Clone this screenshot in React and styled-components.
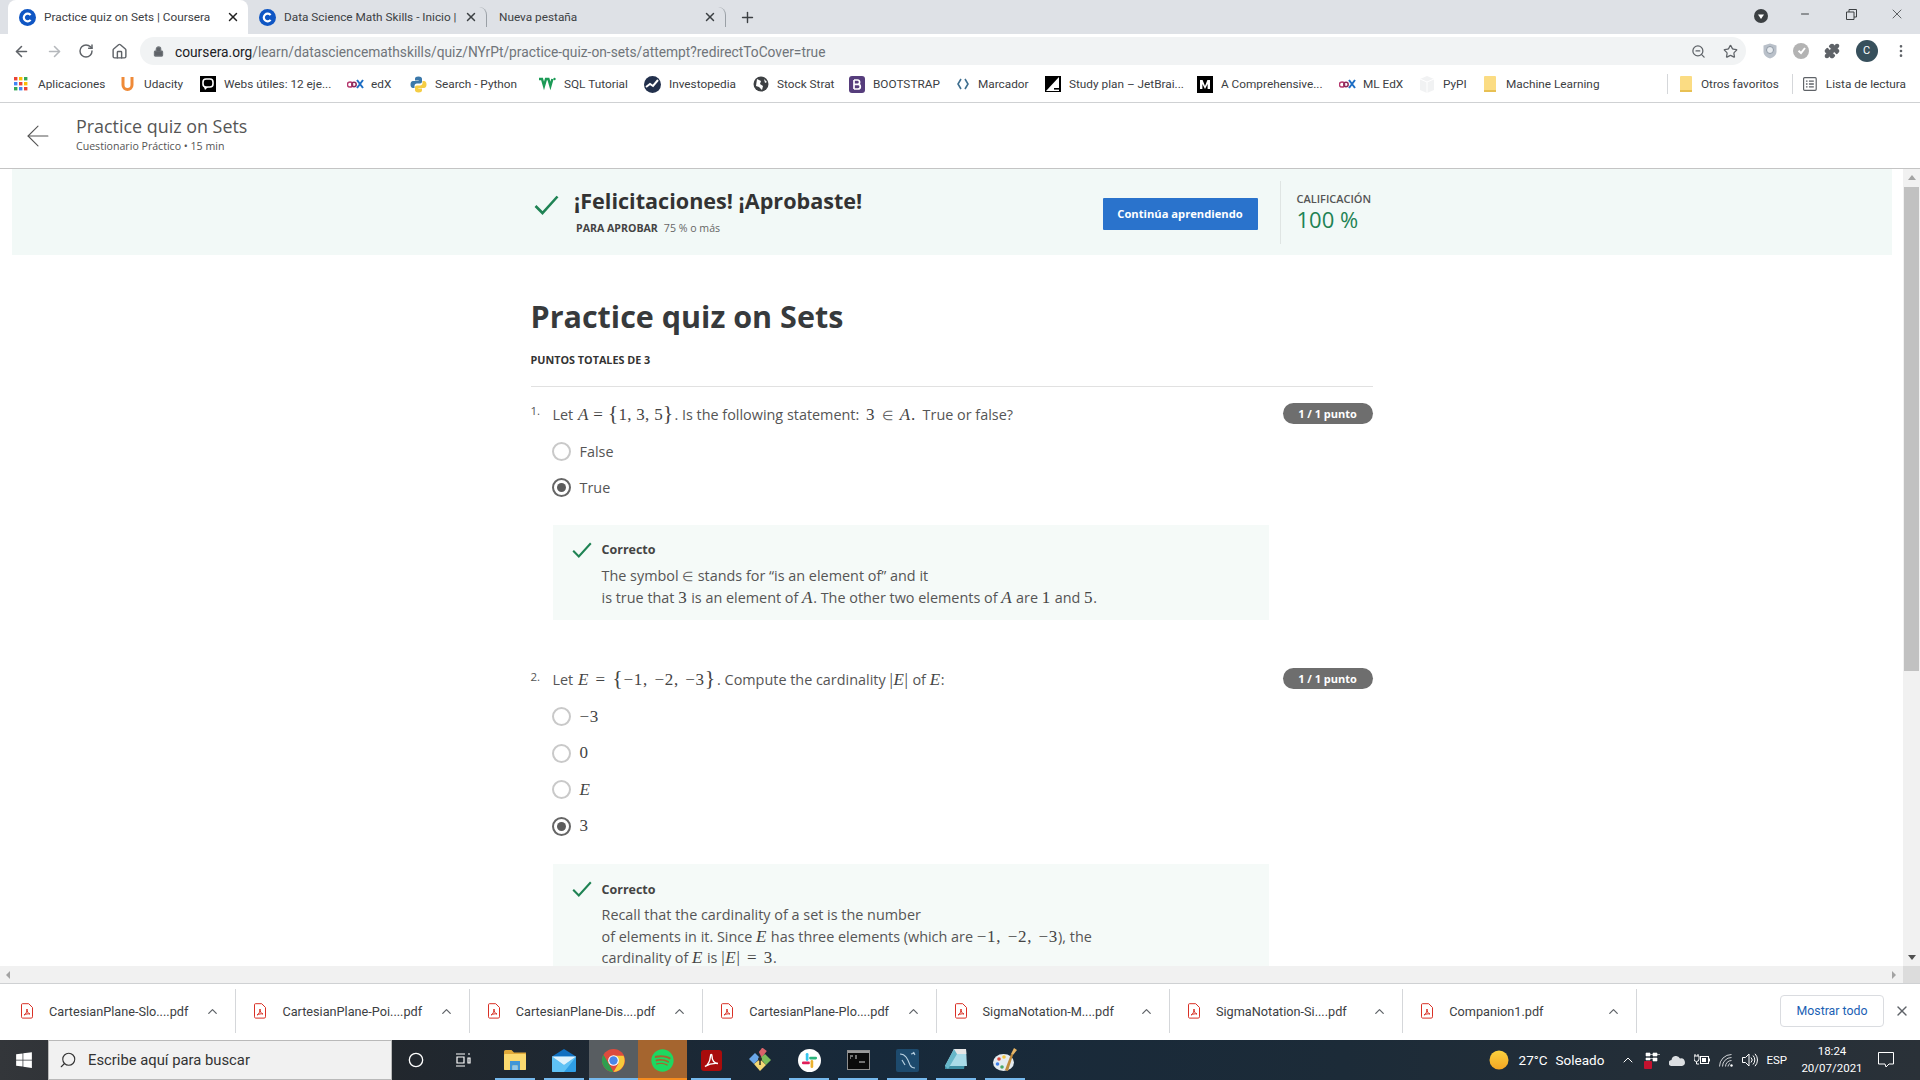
// App.jsx
import React from "react";
import styled, { createGlobalStyle } from "styled-components";
import {
  ArrowLeft,
  ArrowRight,
  RotateCw,
  Home,
  Lock,
  ZoomOut,
  Star,
  Puzzle,
  MoreVertical,
  Minus,
  X,
  Plus,
  ChevronUp,
  Search,
  Circle,
} from "lucide-react";
import { FaWindows, FaSpotify } from "react-icons/fa";

const GlobalStyle = createGlobalStyle`
  html, body {
    margin: 0;
    padding: 0;
    height: 100%;
    overflow: hidden;
    background: #fff;
    font-family: "Open Sans", "Liberation Sans", sans-serif;
  }
  * { box-sizing: border-box; }
`;

const Screen = styled.div`
  width: 1920px;
  height: 1080px;
  display: flex;
  flex-direction: column;
  overflow: hidden;
`;

/* ---------- browser chrome ---------- */

const TabStrip = styled.div`
  height: 34px;
  background: #dee1e6;
  display: flex;
  align-items: stretch;
  padding-left: 8px;
  font-family: Roboto, sans-serif;
  font-size: 11.8px;
  color: #3c4043;
`;

const Tab = styled.div`
  width: ${(p) => p.$w}px;
  display: flex;
  align-items: center;
  padding: 0 8px 0 ${(p) => p.$pad}px;
  background: ${(p) => (p.$active ? "#fff" : "transparent")};
  border-radius: 8px 8px 0 0;
  border-right: ${(p) => (p.$sep ? "1px solid #9aa0a6" : "none")};
  margin: ${(p) => (p.$active ? "0" : "7px 0")};
`;

const TabTitle = styled.span`
  flex: 1;
  margin-left: ${(p) => p.$gap || 0}px;
  white-space: nowrap;
  overflow: hidden;
`;

const NewTab = styled.div`
  display: flex;
  align-items: center;
  margin-left: 13px;
  color: #3c4043;
`;

const WindowControls = styled.div`
  margin-left: auto;
  display: flex;
  align-items: center;
  height: 28px;
  color: #3c4043;
`;

const ControlSlot = styled.div`
  width: 46px;
  display: flex;
  justify-content: center;
`;

const ProfileBadge = styled.div`
  display: flex;
  margin: 3px 14px 0 0;
`;

const Toolbar = styled.div`
  height: 34px;
  background: #fff;
  display: flex;
  align-items: center;
  padding-left: 13px;
  color: #5f6368;
`;

const NavSlot = styled.div`
  width: ${(p) => p.$w || 32.5}px;
  display: flex;
  color: ${(p) => (p.$muted ? "#b5b8bc" : "#5f6368")};
`;

const AddressBar = styled.div`
  width: 1606px;
  height: 28px;
  margin-left: -1px;
  background: #f1f3f4;
  border-radius: 14px;
  display: flex;
  align-items: center;
  padding: 1px 10px 0 13px;
  font-family: Roboto, sans-serif;
  font-size: 13.76px;
  color: #70757a;
`;

const Url = styled.span`
  margin-left: 11px;
  b {
    font-weight: 400;
    color: #202124;
  }
`;

const AddressActions = styled.div`
  margin-left: auto;
  display: flex;
  gap: 17px;
  margin-right: -2px;
  color: #5f6368;
`;

const ExtensionRow = styled.div`
  display: flex;
  align-items: center;
  margin-left: 17px;
  gap: 15.5px;
`;

const Avatar = styled.div`
  width: 22px;
  height: 22px;
  border-radius: 50%;
  background: #37505c;
  color: #fff;
  font-size: 11px;
  line-height: 22px;
  text-align: center;
  font-family: Roboto, sans-serif;
`;

const BookmarkBar = styled.div`
  height: 35px;
  background: #fff;
  border-bottom: 1px solid #cfd1d3;
  display: flex;
  align-items: center;
  padding: 0 0 2px 14px;
  font-family: Roboto, sans-serif;
  font-size: 11.8px;
  color: #3c4043;
`;

const Bookmark = styled.div`
  width: ${(p) => p.$w}px;
  display: flex;
  align-items: center;
  gap: ${(p) => p.$gap || 8}px;
  white-space: nowrap;
  flex: none;
`;

const BarEnd = styled.div`
  margin-left: auto;
  display: flex;
  align-items: center;
  height: 100%;
  padding-right: 14px;
`;

const BarSep = styled.div`
  width: 1px;
  height: 20px;
  background: #d5d7da;
  margin: 0 ${(p) => p.$r}px 0 ${(p) => p.$l}px;
`;

/* ---------- page ---------- */

const PageHeader = styled.div`
  height: 66px;
  border-bottom: 1px solid #c4c4c4;
  display: flex;
  align-items: center;
  padding-left: 21px;
  color: #555;
`;

const HeaderText = styled.div`
  margin-left: 21px;
  margin-top: -4px;
`;

const HeaderTitle = styled.div`
  font-size: 17.9px;
  line-height: 24px;
  color: #555;
`;

const HeaderSub = styled.div`
  font-size: 10.6px;
  line-height: 14px;
  margin-top: 1px;
  color: #555;
`;

const Viewport = styled.div`
  flex: 1;
  min-height: 0;
  display: flex;
`;

const PageScroll = styled.div`
  flex: 1;
  min-width: 0;
  overflow: hidden;
`;

const VScrollbar = styled.div`
  width: 17px;
  background: #f1f1f1;
  display: flex;
  flex-direction: column;
  align-items: center;
  padding-top: 6px;
`;

const UpArrow = styled.div`
  width: 0;
  height: 0;
  border-left: 4px solid transparent;
  border-right: 4px solid transparent;
  border-bottom: 5px solid #a3a3a3;
`;

const DownArrow = styled.div`
  width: 0;
  height: 0;
  border-left: 4px solid transparent;
  border-right: 4px solid transparent;
  border-top: 5px solid #505050;
  margin-top: auto;
  margin-bottom: 6px;
`;

const VThumb = styled.div`
  width: 15px;
  height: 484px;
  margin-top: 7px;
  background: #c1c1c1;
`;

const Banner = styled.div`
  height: 86px;
  margin: 0 11px 0 12px;
  background: #f2f9f7;
  display: flex;
  justify-content: center;
`;

const BannerInner = styled.div`
  width: 842px;
  display: flex;
  align-items: center;
`;

const BannerCheck = styled.div`
  width: 43px;
  padding-left: 3px;
  margin-top: -15px;
  display: flex;
`;

const BannerText = styled.div`
  flex: 1;
`;

const BannerTitle = styled.div`
  font-size: 21.6px;
  font-weight: 700;
  line-height: 30px;
  color: #333;
  margin-top: -3px;
`;

const BannerNote = styled.div`
  font-size: 10.6px;
  margin: 5px 0 0 2px;
  line-height: 14px;
  color: #666;
  b {
    color: #444;
    margin-right: 6px;
  }
`;

const ContinueButton = styled.div`
  width: 155px;
  height: 32px;
  background: #2a73cc;
  color: #fff;
  font-size: 11.2px;
  font-weight: 700;
  line-height: 32px;
  text-align: center;
  border-radius: 1px;
  margin-top: 3px;
`;

const Score = styled.div`
  width: 93.5px;
  height: 63px;
  margin-left: 22px;
  padding-left: 16px;
  border-left: 1px solid #dfe5e3;
  margin-top: 1px;
`;

const ScoreLabel = styled.div`
  font-size: 11px;
  line-height: 14px;
  margin-top: 11px;
  color: #555;
  font-weight: 600;
  white-space: nowrap;
`;

const ScoreValue = styled.div`
  font-size: 22px;
  line-height: 26px;
  color: #1f8354;
`;

const Column = styled.div`
  width: 842px;
  margin: 0 auto;
  padding-top: 37px;
`;

const QuizTitle = styled.h1`
  margin: 0;
  font-size: 30.5px;
  font-weight: 700;
  line-height: 48px;
  color: #373a3c;
`;

const TotalPoints = styled.div`
  margin-top: 12px;
  font-size: 10.8px;
  font-weight: 700;
  line-height: 16px;
  color: #333;
`;

const Rule = styled.div`
  margin-top: 18px;
  height: 1px;
  background: #e1e1e1;
`;

const Question = styled.div`
  margin-top: ${(p) => p.$top}px;
`;

const QuestionRow = styled.div`
  display: flex;
  align-items: center;
  height: 22px;
  font-size: 14.4px;
  color: #555;
`;

const QuestionNumber = styled.div`
  width: 22px;
  font-size: 11.5px;
  margin-top: -5px;
`;

const QuestionText = styled.div`
  flex: 1;
`;

const PointsBadge = styled.div`
  width: 90px;
  height: 21px;
  background: #6e6e6e;
  border-radius: 11px;
  color: #fff;
  font-size: 11px;
  font-weight: 700;
  line-height: 21px;
  text-align: center;
`;

const Options = styled.div`
  margin: 9px 0 ${(p) => p.$after}px 21px;
`;

const OptionRow = styled.div`
  height: 36.4px;
  display: flex;
  align-items: center;
  font-size: 14.4px;
  color: #555;
`;

const Radio = styled.div`
  width: 19px;
  height: 19px;
  border-radius: 50%;
  border: 2px solid ${(p) => (p.$on ? "#666" : "#c9c9c9")};
  background: #fff;
  margin-right: 9px;
  display: flex;
  align-items: center;
  justify-content: center;
  &::after {
    content: "";
    width: 9px;
    height: 9px;
    border-radius: 50%;
    background: ${(p) => (p.$on ? "#5c5c5c" : "transparent")};
  }
`;

const Feedback = styled.div`
  width: 716px;
  margin-left: 22px;
  padding: 15px 0 11px 19px;
  background: #f5faf8;
  font-size: 14.4px;
  color: #555;
`;

const FeedbackHead = styled.div`
  display: flex;
  align-items: center;
  height: 20px;
  font-size: 12.5px;
  font-weight: 700;
  color: #444;
  gap: 10px;
`;

const FeedbackBody = styled.div`
  margin: 5px 0 0 30px;
  line-height: 21.5px;
`;

/* math keeps the textbook serif, as in the reference */
const M = styled.span`
  font-family: "Liberation Serif", serif;
  font-size: 17px;
  letter-spacing: ${(p) => (p.$tight ? 0.1 : 0.7)}px;
  word-spacing: ${(p) => (p.$tight ? 0.5 : 1.5)}px;
  color: #444;
  white-space: nowrap;
  margin: 0 ${(p) => p.$pad || 0}px;
  i {
    font-style: italic;
  }
`;

const Brace = styled.span`
  font-size: 22px;
  line-height: 1;
`;

const Member = styled.span`
  font-size: 13px;
  color: #666;
`;

/* ---------- bottom bars ---------- */

const HScrollbar = styled.div`
  height: 17px;
  background: #f1f1f1;
  display: flex;
  align-items: center;
  padding-left: 6px;
`;

const SideArrow = styled.div`
  width: 0;
  height: 0;
  border-top: 4px solid transparent;
  border-bottom: 4px solid transparent;
  border-right: ${(p) => (p.$left ? "4px solid #a3a3a3" : "none")};
  border-left: ${(p) => (p.$left ? "none" : "4px solid #a3a3a3")};
  margin-left: ${(p) => (p.$left ? 0 : 1882)}px;
`;

const ScrollCorner = styled.div`
  width: 17px;
  height: 17px;
  margin-left: auto;
  background: #dcdcdc;
`;

const DownloadBar = styled.div`
  height: 57px;
  border-top: 1px solid #cfd1d3;
  background: #fff;
  display: flex;
  align-items: center;
  padding: 0 0 2px 3px;
  font-family: Roboto, sans-serif;
  font-size: 12.7px;
  color: #3c4043;
`;

const DownloadItem = styled.div`
  width: 233.4px;
  height: 44px;
  border-right: 1px solid #d5d7da;
  display: flex;
  align-items: center;
  padding-left: 18px;
  gap: 16px;
`;

const FileName = styled.span`
  flex: 1;
  white-space: nowrap;
`;

const Chevron = styled.span`
  display: flex;
  margin-right: 15px;
  color: #5f6368;
`;

const ShowAll = styled.div`
  margin-left: auto;
  width: 104px;
  height: 32px;
  border: 1px solid #dadce0;
  border-radius: 4px;
  color: #1a5fb4;
  font-size: 12.3px;
  line-height: 30px;
  text-align: center;
`;

const CloseBar = styled.div`
  width: 36px;
  display: flex;
  justify-content: center;
  color: #5f6368;
`;

const Taskbar = styled.div`
  height: 40px;
  background: linear-gradient(90deg, #33363a 0, #22272d 20%, #17293a 45%, #1c2b38 70%, #2a3138 100%);
  display: flex;
  align-items: center;
  color: #fff;
  font-family: Roboto, sans-serif;
`;

const StartButton = styled.div`
  width: 48px;
  display: flex;
  justify-content: center;
`;

const SearchBox = styled.div`
  width: 344px;
  height: 40px;
  background: #f1f1f1;
  border: 1px solid #b9b9b9;
  display: flex;
  align-items: center;
  padding-left: 10px;
  gap: 11px;
  color: #333;
  font-size: 14.8px;
`;

const MirroredSearch = styled(Search)`
  transform: scaleX(-1);
`;

const SystemButton = styled.div`
  width: 47.5px;
  display: flex;
  justify-content: center;
  color: #fff;
`;

const AppRow = styled.div`
  display: flex;
  margin-left: 3.5px;
`;

const AppSlot = styled.div`
  width: 49px;
  height: 40px;
  display: flex;
  align-items: center;
  justify-content: center;
  position: relative;
  background: ${(p) => p.$bg || "transparent"};
  &::after {
    content: "";
    position: absolute;
    left: ${(p) => (p.$bg ? 0 : 4.5)}px;
    right: ${(p) => (p.$bg ? 0 : 4.5)}px;
    bottom: 0;
    height: 2px;
    background: ${(p) => p.$line || "transparent"};
  }
`;

const Tray = styled.div`
  margin-left: auto;
  display: flex;
  align-items: center;
`;

const TrayText = styled.span`
  margin: 0 ${(p) => p.$r || 0}px 0 ${(p) => p.$l || 0}px;
  font-size: ${(p) => p.$size || 13}px;
`;

const TrayIcon = styled.span`
  display: flex;
  margin-right: ${(p) => p.$r}px;
`;

const Clock = styled.div`
  width: 70px;
  margin-left: 10px;
  font-size: 11.5px;
  line-height: 17px;
  text-align: center;
`;

const NotifySlot = styled.div`
  width: 53px;
  display: flex;
  justify-content: flex-end;
  padding-right: 26px;
`;

/* ---------- drawn icons ---------- */

const Coursera = () => (
  <svg width="17" height="17" viewBox="0 0 17 17">
    <circle cx="8.5" cy="8.5" r="8.5" fill="#0f56c4" />
    <path d="M11.6 6.2a3.8 3.8 0 1 0 0 4.6" fill="none" stroke="#fff" strokeWidth="2.2" />
  </svg>
);

const AppsGrid = () => {
  const colors = ["#ea4335", "#fbbc04", "#34a853", "#4285f4", "#ea4335", "#fbbc04", "#34a853", "#4285f4", "#ea4335"];
  return (
    <svg width="14" height="14" viewBox="0 0 14 14">
      {colors.map((c, i) => (
        <rect key={i} x={(i % 3) * 5} y={Math.floor(i / 3) * 5} width="3.4" height="3.4" fill={c} />
      ))}
    </svg>
  );
};

const Udacity = () => (
  <svg width="13" height="16" viewBox="0 0 13 16">
    <path d="M2 1v8a4.5 4.5 0 0 0 9 0V1" fill="none" stroke="#ef8a38" strokeWidth="3" />
  </svg>
);

const Chat = () => (
  <svg width="16" height="16" viewBox="0 0 16 16">
    <rect width="16" height="16" fill="#000" />
    <rect x="3" y="3" width="10" height="8" rx="3" fill="none" stroke="#fff" strokeWidth="1.6" />
    <path d="M4 11h4l-3 3z" fill="#fff" />
  </svg>
);

const EdX = () => (
  <svg width="17" height="10" viewBox="0 0 17 10">
    <circle cx="3" cy="5.5" r="2.6" fill="none" stroke="#b5386e" strokeWidth="1.5" />
    <circle cx="7" cy="5.5" r="2.2" fill="none" stroke="#8e2a5c" strokeWidth="1.5" />
    <path d="M10 1l6 8M16 1l-6 8" stroke="#1c6dc4" strokeWidth="2" />
  </svg>
);

const Python = () => (
  <svg width="17" height="17" viewBox="0 0 17 17">
    <path d="M8.500 0.500c-3 0-3.500 1-3.500 2.500v1.500h3.700v.6H3C1.400 5.100.5 6.300.5 8.500s.9 3.400 2.500 3.400h1.500V10c0-1.500 1-2.400 2.400-2.400h3.200c1.200 0 1.900-.8 1.900-2V3c0-1.600-1-2.500-3.500-2.500z" fill="#3b78aa" />
    <path d="M8.500 16.500c3 0 3.500-1 3.500-2.500v-1.500H8.300v-.6H14c1.600 0 2.500-1.200 2.500-3.400s-.9-3.400-2.500-3.400h-1.500V7c0 1.500-1 2.400-2.400 2.400H6.900c-1.200 0-1.900.8-1.900 2V14c0 1.600 1 2.500 3.500 2.500z" fill="#f5cd44" />
  </svg>
);

const W3 = () => (
  <svg width="17" height="14" viewBox="0 0 17 14">
    <path d="M0 2h3l2 7 2-7h2.400l2 7 2-7" fill="none" stroke="#1b9a56" strokeWidth="2.4" />
    <circle cx="15.500" cy="2" r="1.200" fill="#1b9a56" />
  </svg>
);

const Investopedia = () => (
  <svg width="17" height="17" viewBox="0 0 17 17">
    <circle cx="8.500" cy="8.500" r="8.500" fill="#22304c" />
    <path d="M2 11l4-3 3 2 5-6" fill="none" stroke="#fff" strokeWidth="2" />
  </svg>
);

const Globe = () => (
  <svg width="16" height="16" viewBox="0 0 16 16">
    <circle cx="8" cy="8" r="7.500" fill="#3d4043" />
    <path d="M4 3l4 2-1 3 3 2-1 4-3-3-3-1zM11 3l3 3-2 1z" fill="#fff" />
  </svg>
);

const Bootstrap = () => (
  <svg width="16" height="17" viewBox="0 0 16 17">
    <rect width="16" height="17" rx="3" fill="#563d7c" />
    <path d="M5 4v9M5 4h3.400a2.200 2.200 0 0 1 0 4.400H5M5 8.400h4a2.300 2.300 0 0 1 0 4.600H5" fill="none" stroke="#fff" strokeWidth="1.700" />
  </svg>
);

const Marker = () => (
  <svg width="16" height="16" viewBox="0 0 16 16">
    <path d="M6 3L3 8l3 5M10 3l3 5-3 5" fill="none" stroke="#3f6f8f" strokeWidth="1.600" />
  </svg>
);

const JetBrains = () => (
  <svg width="16" height="16" viewBox="0 0 16 16">
    <rect width="16" height="16" fill="#000" />
    <path d="M1 15L14 1v14z" fill="#fff" />
    <rect x="9" y="12" width="5" height="1.600" fill="#000" />
  </svg>
);

const Medium = () => (
  <svg width="16" height="17" viewBox="0 0 16 17">
    <rect width="16" height="17" fill="#000" />
    <path d="M3 4h2.600L8 10l2.400-6H13v9H10.600V8L8 13 5.400 8v5H3z" fill="#fff" />
  </svg>
);

const PyPI = () => (
  <svg width="14" height="17" viewBox="0 0 14 17">
    <path d="M7 0l7 3v11l-7 3-7-3V3z" fill="#f1f2f3" />
    <path d="M7 6v11M0 3l7 3 7-3" fill="none" stroke="#fff" />
  </svg>
);

const Folder = () => (
  <svg width="12" height="16" viewBox="0 0 12 16">
    <rect width="12" height="16" rx="1" fill="#fbdc83" />
    <rect y="14" width="12" height="2" fill="#e8c053" />
  </svg>
);

const Reader = () => (
  <svg width="14" height="14" viewBox="0 0 14 14">
    <rect x="0.600" y="0.600" width="12.800" height="12.800" rx="1" fill="none" stroke="#5f6368" strokeWidth="1.200" />
    <path d="M3 4h1.600M6 4h5M3 7h1.600M6 7h5M3 10h1.600M6 10h5" stroke="#5f6368" strokeWidth="1.300" />
  </svg>
);

const ProfileDrop = () => (
  <svg width="14" height="14" viewBox="0 0 14 14">
    <circle cx="7" cy="7" r="7" fill="#3c4043" />
    <path d="M4 5.500h6L7 10z" fill="#fff" />
  </svg>
);

const RestoreIcon = () => (
  <svg width="11" height="11" viewBox="0 0 11 11">
    <path d="M.5 3h7.500v7.500H.5zM3 3V.5h7.500V8H8" fill="none" stroke="#3c4043" />
  </svg>
);

const ShieldExt = () => (
  <svg width="14" height="16" viewBox="0 0 14 16">
    <path d="M7 .5l6.500 2v6c0 3.500-3 6-6.500 7-3.500-1-6.500-3.500-6.500-7v-6z" fill="#b9c0c9" />
    <circle cx="7" cy="7" r="3.500" fill="#e8ecf0" stroke="#8f99a5" />
  </svg>
);

const GrayExt = () => (
  <svg width="16" height="16" viewBox="0 0 16 16">
    <circle cx="8" cy="8" r="8" fill="#b3b3b3" />
    <path d="M12 5l-4 5-2.500-2.200" fill="none" stroke="#fff" strokeWidth="2" />
  </svg>
);

const Check = ({ size }) => (
  <svg width={size} height={size * 0.8} viewBox="0 0 25 20">
    <path d="M1.500 11l7 7L23.500 1.500" fill="none" stroke="#1f8354" strokeWidth="2.600" />
  </svg>
);

const PdfIcon = () => (
  <svg width="12" height="16" viewBox="0 0 12 16">
    <path d="M1.500.7h6.200l3.800 3.800v9.300a1.300 1.300 0 0 1-1.300 1.300H1.500A1.300 1.300 0 0 1 .5 13.800V1.700a1 1 0 0 1 1-1z" fill="#fff" stroke="#d93025" />
    <path d="M3 12c2-1 3-3 3-6 0 3 1 4 3 5-2-.5-4 0-6 1z" fill="none" stroke="#d93025" />
  </svg>
);

const Explorer = () => (
  <svg width="22" height="20" viewBox="0 0 22 20">
    <path d="M0 1.500A1.500 1.500 0 0 1 1.500 0h6L10 2.500h12V19a1 1 0 0 1-1 1H1a1 1 0 0 1-1-1z" fill="#e0a93a" />
    <rect y="4" width="22" height="16" rx="1" fill="#fbd96f" />
    <path d="M6 11h10v9h-2.500v-4.500h-5V20H6z" fill="#3f96d8" />
    <rect x="8.500" y="15.500" width="5" height="4.500" fill="#8fc8ee" />
  </svg>
);

const Mail = () => (
  <svg width="24" height="23" viewBox="0 0 24 23">
    <path d="M0 7.500L12 0l12 7.500L12 14z" fill="#0f6fc0" />
    <path d="M0 7.500h24V22a1 1 0 0 1-1 1H1a1 1 0 0 1-1-1z" fill="#2f9fe6" />
    <path d="M0 7.500L12 16 24 7.500V8L12 23H1a1 1 0 0 1-1-1z" fill="#5fc2f5" />
    <path d="M0 7.500h24L12 16z" fill="#dff2fc" />
  </svg>
);

const Chrome = () => (
  <svg width="23" height="23" viewBox="0 0 24 24">
    <circle cx="12" cy="12" r="12" fill="#dd4b3e" />
    <path d="M1.600 6L7 15.500 12 24A12 12 0 0 1 1.600 6z" fill="#2f9e4f" />
    <path d="M12 7h10.500A12 12 0 0 1 12 24l5-8.500z" fill="#f8c93a" />
    <circle cx="12" cy="12" r="5.600" fill="#fff" />
    <circle cx="12" cy="12" r="4.400" fill="#4a86e8" />
  </svg>
);

const Acrobat = () => (
  <svg width="21" height="21" viewBox="0 0 21 21">
    <rect width="21" height="21" rx="3" fill="#a90c0c" />
    <path d="M4 16.500c3-1.500 5-6 5.500-10.500 0-2 1.500-2 1.500 0 0 4.500 2 7 6 7.500-4.500-.5-9 .5-13 3z" fill="none" stroke="#fff" strokeWidth="1.400" />
  </svg>
);

const Kraken = () => (
  <svg width="24" height="24" viewBox="0 0 24 24">
    <path d="M12 4l4-4 4 4-4 4-2 2z" fill="#d9636a" transform="rotate(-8 12 12)" />
    <path d="M1 11l6-6 5 5-6 6z" fill="#6aa6e8" />
    <path d="M12 10l5-4 6 6-5 5z" fill="#7dbd5a" />
    <path d="M6 16l6-5 6 6-6 6z" fill="#f3d774" />
    <circle cx="12" cy="11" r="2" fill="#2a2a2a" />
    <path d="M12 11v6" stroke="#2a2a2a" strokeWidth="1.500" />
  </svg>
);

const Slack = () => (
  <svg width="23" height="23" viewBox="0 0 24 24">
    <circle cx="12" cy="12" r="12" fill="#fff" />
    <path d="M9.500 5.500v5.500" stroke="#36c5f0" strokeWidth="2.800" strokeLinecap="round" />
    <path d="M13 9.500h5.500" stroke="#2eb67d" strokeWidth="2.800" strokeLinecap="round" />
    <path d="M14.500 13v5.500" stroke="#ecb22e" strokeWidth="2.800" strokeLinecap="round" />
    <path d="M5.500 14.500H11" stroke="#e01e5a" strokeWidth="2.800" strokeLinecap="round" />
  </svg>
);

const Terminal = () => (
  <svg width="23" height="20" viewBox="0 0 23 20">
    <rect x=".5" y=".5" width="22" height="19" fill="#0b0b0b" stroke="#8e8e8e" />
    <rect x="1" y="1" width="21" height="2" fill="#9a9a9a" />
    <path d="M3 6h3M3 8h1M8 6h2M8 8h2M12 12h6" stroke="#d8d8d8" />
  </svg>
);

const Sql = () => (
  <svg width="23" height="23" viewBox="0 0 23 23">
    <rect width="23" height="23" rx="2" fill="#1d4a6d" />
    <path d="M4 5c6 0 8 6 10 11 1 2 3 3 5 3M6 11l3 5M17 3l2 3M15 5l4-1" fill="none" stroke="#b7cfe0" strokeWidth="1.200" />
  </svg>
);

const Notepad = () => (
  <svg width="22" height="24" viewBox="0 0 22 24">
    <path d="M9 1h12l1 17H0z" fill="#a9dbe8" />
    <path d="M9 1h12l.3 5H7z" fill="#e6e6e6" />
    <path d="M0 18h22v3H0z" fill="#3d8ea3" transform="skewX(-8)" />
    <path d="M9 1L0 18l3 3 9-15z" fill="#67b7c9" />
  </svg>
);

const Paint = () => (
  <svg width="25" height="25" viewBox="0 0 25 25">
    <ellipse cx="10.500" cy="14.500" rx="10.500" ry="8.500" fill="#e4ebf0" />
    <circle cx="6" cy="11" r="1.800" fill="#d94a3d" />
    <circle cx="11" cy="9" r="1.800" fill="#f3c53c" />
    <circle cx="4.500" cy="16" r="1.800" fill="#3f80ea" />
    <circle cx="9" cy="19" r="1.800" fill="#49a768" />
    <path d="M12 22L18 6l2 1-5 16z" fill="#c08a3a" />
    <path d="M18 6l3-6 3 2-4 5z" fill="#e7b566" />
  </svg>
);

const Sun = () => (
  <svg width="20" height="20" viewBox="0 0 20 20">
    <defs>
      <linearGradient id="sunFill" x1="0" y1="0" x2="0" y2="1">
        <stop offset="0" stopColor="#fbd23e" />
        <stop offset="1" stopColor="#f5a623" />
      </linearGradient>
    </defs>
    <circle cx="10" cy="10" r="9.500" fill="url(#sunFill)" />
  </svg>
);

const TrayDropbox = () => (
  <svg width="16" height="17" viewBox="0 0 16 17">
    <path d="M2 1h4v3H2zM9 1h4v3H9zM2 6h4v2H2zM9 6h4v3H9zM6 2.500h3M6 6.500h3M13 2.500h3" fill="#fff" stroke="#fff" strokeWidth=".6" />
    <rect y="9" width="8" height="8" rx="1" fill="#c4122f" />
  </svg>
);

const TrayCloud = () => (
  <svg width="16" height="11" viewBox="0 0 16 11">
    <path d="M3 11a3 3 0 0 1-.5-6A4.500 4.500 0 0 1 11 3.500 3.800 3.800 0 0 1 13 11z" fill="#dcdfe2" />
  </svg>
);

const TrayPower = () => (
  <svg width="16" height="12" viewBox="0 0 16 12">
    <path d="M1 0v2M4 0v2M0 2h5v3a2.500 2.500 0 0 1-5 0zM2.500 8v2h2.500" fill="none" stroke="#fff" />
    <rect x="6.500" y="2.500" width="8" height="7" fill="none" stroke="#fff" />
    <rect x="8" y="4" width="4" height="4" fill="#fff" />
    <rect x="15" y="4.500" width="1" height="3" fill="#fff" />
  </svg>
);

const TrayWifi = () => (
  <svg width="15" height="13" viewBox="0 0 15 13">
    <path d="M.5 12.500A12 12 0 0 1 12.500.5M3.500 12.500a9 9 0 0 1 9-9M6.500 12.500a6 6 0 0 1 6-6M9 12.500a3.500 3.500 0 0 1 2-3" fill="none" stroke="#cfd2d5" strokeWidth="1" />
    <circle cx="12.500" cy="11.500" r="1.200" fill="#fff" />
  </svg>
);

const TrayVolume = () => (
  <svg width="16" height="14" viewBox="0 0 16 14">
    <path d="M.5 4.500h3L7 1v12L3.500 9.500h-3z" fill="none" stroke="#fff" />
    <path d="M9 4.500a3.500 3.500 0 0 1 0 5M11 2.500a6.500 6.500 0 0 1 0 9M13 .8a9 9 0 0 1 0 12.400" fill="none" stroke="#fff" />
  </svg>
);

const TrayNotify = () => (
  <svg width="16" height="16" viewBox="0 0 16 16">
    <path d="M.5.5h15v11.500h-4.500L8 15l-1-3H.5z" fill="none" stroke="#fff" />
  </svg>
);

const TaskView = () => (
  <svg width="16" height="16" viewBox="0 0 16 16">
    <path d="M1 2h9M1 14h9M2 5h7v6H2zM13 2h2M13 6h2v5h-2z" fill="none" stroke="#fff" strokeWidth="1.200" />
  </svg>
);

/* ---------- data ---------- */

const bookmarks = [
  { w: 107, icon: <AppsGrid />, label: "Aplicaciones", gap: 10 },
  { w: 79, icon: <Udacity />, label: "Udacity", gap: 10 },
  { w: 147, icon: <Chat />, label: "Webs útiles: 12 eje..." },
  { w: 63, icon: <EdX />, label: "edX", gap: 7 },
  { w: 129, icon: <Python />, label: "Search - Python" },
  { w: 105, icon: <W3 />, label: "SQL Tutorial" },
  { w: 109, icon: <Investopedia />, label: "Investopedia" },
  { w: 96, icon: <Globe />, label: "Stock Strat" },
  { w: 106, icon: <Bootstrap />, label: "BOOTSTRAP" },
  { w: 90, icon: <Marker />, label: "Marcador", gap: 7 },
  { w: 152, icon: <JetBrains />, label: "Study plan – JetBrai..." },
  { w: 142, icon: <Medium />, label: "A Comprehensive..." },
  { w: 81, icon: <EdX />, label: "ML EdX", gap: 7 },
  { w: 64, icon: <PyPI />, label: "PyPI", gap: 9 },
  { w: 160, icon: <Folder />, label: "Machine Learning", gap: 10 },
];

const downloads = [
  "CartesianPlane-Slo....pdf",
  "CartesianPlane-Poi....pdf",
  "CartesianPlane-Dis....pdf",
  "CartesianPlane-Plo....pdf",
  "SigmaNotation-M....pdf",
  "SigmaNotation-Si....pdf",
  "Companion1.pdf",
];

const taskApps = [
  { icon: <Explorer />, line: "#76b9ed" },
  { icon: <Mail />, line: "#76b9ed" },
  { icon: <Chrome />, line: "#76b9ed", bg: "#585d61" },
  { icon: <FaSpotify size={23} color="#1ed760" />, line: "#f78c1e", bg: "#a5652f" },
  { icon: <Acrobat />, line: "#76b9ed" },
  { icon: <Kraken /> },
  { icon: <Slack />, line: "#76b9ed" },
  { icon: <Terminal />, line: "#76b9ed" },
  { icon: <Sql />, line: "#76b9ed" },
  { icon: <Notepad />, line: "#76b9ed" },
  { icon: <Paint />, line: "#76b9ed" },
];

function Option({ on, children }) {
  return (
    <OptionRow>
      <Radio $on={on} />
      {children}
    </OptionRow>
  );
}

function FeedbackBox({ children }) {
  return (
    <Feedback>
      <FeedbackHead>
        <Check size={20} />
        Correcto
      </FeedbackHead>
      <FeedbackBody>{children}</FeedbackBody>
    </Feedback>
  );
}

export default function App() {
  return (
    <>
      <GlobalStyle />
      <Screen>
        <TabStrip>
          <Tab $w={240} $pad={11} $active>
            <Coursera />
            <TabTitle $gap={8}>Practice quiz on Sets | Coursera</TabTitle>
            <X size={14} strokeWidth={2.5} color="#222" />
          </Tab>
          <Tab $w={239} $pad={11} $sep>
            <Coursera />
            <TabTitle $gap={8}>Data Science Math Skills - Inicio |</TabTitle>
            <X size={14} strokeWidth={2.5} />
          </Tab>
          <Tab $w={239} $pad={12} $sep>
            <TabTitle>Nueva pestaña</TabTitle>
            <X size={14} strokeWidth={2.5} />
          </Tab>
          <NewTab>
            <Plus size={17} strokeWidth={2} />
          </NewTab>
          <WindowControls>
            <ProfileBadge>
              <ProfileDrop />
            </ProfileBadge>
            <ControlSlot>
              <Minus size={12} />
            </ControlSlot>
            <ControlSlot>
              <RestoreIcon />
            </ControlSlot>
            <ControlSlot>
              <X size={16} strokeWidth={1.2} />
            </ControlSlot>
          </WindowControls>
        </TabStrip>

        <Toolbar>
          <NavSlot>
            <ArrowLeft size={17} strokeWidth={2.2} />
          </NavSlot>
          <NavSlot $muted>
            <ArrowRight size={17} strokeWidth={2.2} />
          </NavSlot>
          <NavSlot>
            <RotateCw size={16} strokeWidth={2.2} />
          </NavSlot>
          <NavSlot $w={30.5}>
            <Home size={17} strokeWidth={2} />
          </NavSlot>
          <AddressBar>
            <Lock size={11} fill="#5f6368" strokeWidth={2.4} />
            <Url>
              <b>coursera.org</b>/learn/datasciencemathskills/quiz/NYrPt/practice-quiz-on-sets/attempt?redirectToCover=true
            </Url>
            <AddressActions>
              <ZoomOut size={15} />
              <Star size={15} />
            </AddressActions>
          </AddressBar>
          <ExtensionRow>
            <ShieldExt />
            <GrayExt />
            <Puzzle size={16} color="#5f6368" fill="#5f6368" />
            <Avatar>C</Avatar>
            <MoreVertical size={16} color="#5f6368" />
          </ExtensionRow>
        </Toolbar>

        <BookmarkBar>
          {bookmarks.map((b) => (
            <Bookmark key={b.label} $w={b.w} $gap={b.gap}>
              {b.icon}
              {b.label}
            </Bookmark>
          ))}
          <BarEnd>
            <BarSep $l={0} $r={12} />
            <Bookmark $w={112} $gap={9}>
              <Folder />
              Otros favoritos
            </Bookmark>
            <BarSep $l={0} $r={10} />
            <Bookmark $w={103} $gap={9}>
              <Reader />
              Lista de lectura
            </Bookmark>
          </BarEnd>
        </BookmarkBar>

        <PageHeader>
          <ArrowLeft size={34} strokeWidth={0.75} />
          <HeaderText>
            <HeaderTitle>Practice quiz on Sets</HeaderTitle>
            <HeaderSub>Cuestionario Práctico • 15 min</HeaderSub>
          </HeaderText>
        </PageHeader>

        <Viewport>
          <PageScroll>
            <Banner>
              <BannerInner>
                <BannerCheck>
                  <Check size={25} />
                </BannerCheck>
                <BannerText>
                  <BannerTitle>¡Felicitaciones! ¡Aprobaste!</BannerTitle>
                  <BannerNote>
                    <b>PARA APROBAR</b>75 % o más
                  </BannerNote>
                </BannerText>
                <ContinueButton>Continúa aprendiendo</ContinueButton>
                <Score>
                  <ScoreLabel>CALIFICACIÓN</ScoreLabel>
                  <ScoreValue>100 %</ScoreValue>
                </Score>
              </BannerInner>
            </Banner>

            <Column>
              <QuizTitle>Practice quiz on Sets</QuizTitle>
              <TotalPoints>PUNTOS TOTALES DE 3</TotalPoints>
              <Rule />

              <Question $top={15}>
                <QuestionRow>
                  <QuestionNumber>1.</QuestionNumber>
                  <QuestionText>
                    Let{" "}
                    <M $pad={1} $tight>
                      <i>A</i> = <Brace>{"{"}</Brace>1, 3, 5<Brace>{"}"}</Brace>
                    </M>
                    . Is the following statement:{" "}
                    <M $pad={3}>
                      3 <Member>∈</Member> <i>A</i>.
                    </M>{" "}
                    True or false?
                  </QuestionText>
                  <PointsBadge>1 / 1 punto</PointsBadge>
                </QuestionRow>
                <Options $after={19}>
                  <Option>False</Option>
                  <Option on>True</Option>
                </Options>
                <FeedbackBox>
                  The symbol <M><Member>∈</Member></M> stands for “is an element of” and it
                  <br />
                  is true that <M>3</M> is an element of <M><i>A</i></M>. The other two elements of{" "}
                  <M><i>A</i></M> are <M>1</M> and <M>5</M>.
                </FeedbackBox>
              </Question>

              <Question $top={48}>
                <QuestionRow>
                  <QuestionNumber>2.</QuestionNumber>
                  <QuestionText>
                    Let{" "}
                    <M $pad={1}>
                      <i>E</i> = <Brace>{"{"}</Brace>−1, −2, −3<Brace>{"}"}</Brace>
                    </M>
                    . Compute the cardinality{" "}
                    <M>
                      |<i>E</i>|
                    </M>{" "}
                    of{" "}
                    <M>
                      <i>E</i>
                    </M>
                    :
                  </QuestionText>
                  <PointsBadge>1 / 1 punto</PointsBadge>
                </QuestionRow>
                <Options $after={20}>
                  <Option>
                    <M>−3</M>
                  </Option>
                  <Option>
                    <M>0</M>
                  </Option>
                  <Option>
                    <M>
                      <i>E</i>
                    </M>
                  </Option>
                  <Option on>
                    <M>3</M>
                  </Option>
                </Options>
                <FeedbackBox>
                  Recall that the cardinality of a set is the number
                  <br />
                  of elements in it. Since <M><i>E</i></M> has three elements (which are{" "}
                  <M>−1, −2, −3</M>), the
                  <br />
                  cardinality of <M><i>E</i></M> is{" "}
                  <M>
                    |<i>E</i>| = 3
                  </M>
                  .
                </FeedbackBox>
              </Question>
            </Column>
          </PageScroll>
          <VScrollbar>
            <UpArrow />
            <VThumb />
            <DownArrow />
          </VScrollbar>
        </Viewport>

        <HScrollbar>
          <SideArrow $left />
          <SideArrow />
          <ScrollCorner />
        </HScrollbar>

        <DownloadBar>
          {downloads.map((name) => (
            <DownloadItem key={name}>
              <PdfIcon />
              <FileName>{name}</FileName>
              <Chevron>
                <ChevronUp size={15} />
              </Chevron>
            </DownloadItem>
          ))}
          <ShowAll>Mostrar todo</ShowAll>
          <CloseBar>
            <X size={16} />
          </CloseBar>
        </DownloadBar>

        <Taskbar>
          <StartButton>
            <FaWindows size={18} />
          </StartButton>
          <SearchBox>
            <MirroredSearch size={18} strokeWidth={1.5} />
            Escribe aquí para buscar
          </SearchBox>
          <SystemButton>
            <Circle size={16} strokeWidth={2} />
          </SystemButton>
          <SystemButton>
            <TaskView />
          </SystemButton>
          <AppRow>
            {taskApps.map((a, i) => (
              <AppSlot key={i} $bg={a.bg} $line={a.line}>
                {a.icon}
              </AppSlot>
            ))}
          </AppRow>
          <Tray>
            <Sun />
            <TrayText $l={10} $r={8} $size={13.5}>27°C</TrayText>
            <TrayText $r={16} $size={13.5}>Soleado</TrayText>
            <TrayIcon $r={8}>
              <ChevronUp size={16} strokeWidth={1.5} />
            </TrayIcon>
            <TrayIcon $r={9}>
              <TrayDropbox />
            </TrayIcon>
            <TrayIcon $r={9}>
              <TrayCloud />
            </TrayIcon>
            <TrayIcon $r={9}>
              <TrayPower />
            </TrayIcon>
            <TrayIcon $r={8}>
              <TrayWifi />
            </TrayIcon>
            <TrayIcon $r={8}>
              <TrayVolume />
            </TrayIcon>
            <TrayText $size={11.5}>ESP</TrayText>
            <Clock>
              18:24
              <br />
              20/07/2021
            </Clock>
            <NotifySlot>
              <TrayNotify />
            </NotifySlot>
          </Tray>
        </Taskbar>
      </Screen>
    </>
  );
}
